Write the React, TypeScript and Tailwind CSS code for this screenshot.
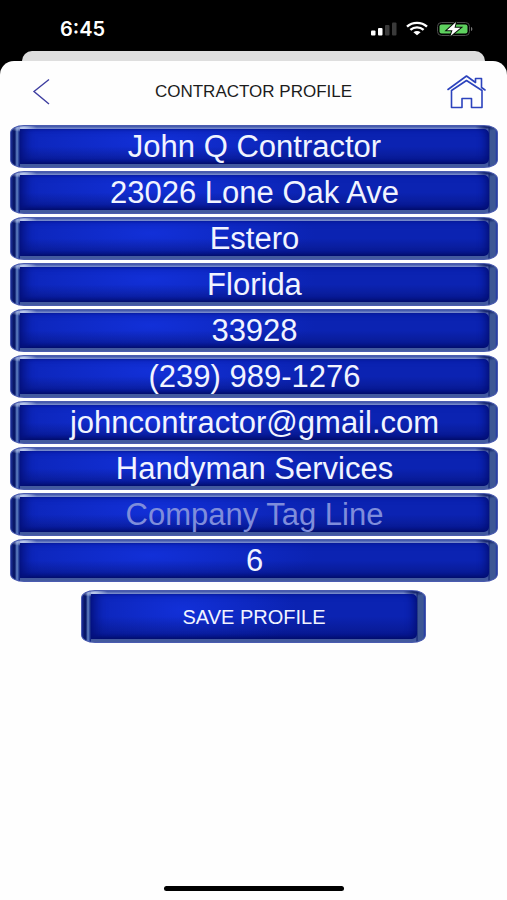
import { useState } from "react";
import type { ReactNode } from "react";

const fields = [
  { id: "name", label: "Name", value: "John Q Contractor", type: "text" },
  { id: "address", label: "Address", value: "23026 Lone Oak Ave", type: "text" },
  { id: "city", label: "City", value: "Estero", type: "text" },
  { id: "state", label: "State", value: "Florida", type: "text" },
  { id: "zip", label: "Zip code", value: "33928", type: "text" },
  { id: "phone", label: "Phone", value: "(239) 989-1276", type: "tel" },
  { id: "email", label: "Email", value: "johncontractor@gmail.com", type: "email" },
  { id: "company", label: "Company", value: "Handyman Services", type: "text" },
  { id: "tagline", label: "Company Tag Line", value: "", type: "text" },
  { id: "tax", label: "Sales tax", value: "6", type: "text" },
];

const face =
  "block w-full rounded-r-[5px] bg-[linear-gradient(to_bottom,transparent_50%,rgba(2,6,80,0.4)_100%),radial-gradient(ellipse_35%_110%_at_28%_35%,#1230d8,#0b23b2)] text-center text-[#f1f4ff] shadow-[inset_10px_0_12px_-6px_#04107a,inset_-8px_0_9px_-5px_#04107a,inset_0_-3px_4px_-2px_#020a5c,inset_0_2px_3px_-2px_#06179a] outline-none";

function Bevel({ children }: { children: ReactNode }) {
  return (
    <div className="rounded-[14px/8px] border border-[#4a5bb0] bg-[radial-gradient(ellipse_14px_4px_at_12px_2px,#c3d1f0,transparent),radial-gradient(ellipse_12px_4px_at_calc(100%-10px)_1px,#101f66,transparent),linear-gradient(to_right,#1b2c96_0px,#05135f_3px,#0a1c70_4px,#6787c6_6px,#3c5cae_7px,#07157a_9px,transparent_9px,transparent_calc(100%-9px),#0a1c70_calc(100%-8px),#3d5795_calc(100%-7px),#3d5795_calc(100%-2px),#2138a8_100%),linear-gradient(to_bottom,#3a50a6_0px,#8093d0_3px,#435a9f_6px,#435a9f_100%)] pt-[3px] pr-[8px] pb-[3px] pl-[9px]">
      {children}
    </div>
  );
}

function StatusIcons() {
  return (
    <svg width="104" height="16" viewBox="0 0 104 16" aria-hidden="true">
      <rect x="0" y="9.5" width="4.5" height="5" rx="1" fill="#fff" />
      <rect x="7" y="7" width="4.5" height="7.500" rx="1" fill="#fff" />
      <rect x="14" y="4" width="4.5" height="10.500" rx="1" fill="#3a3a3a" />
      <rect x="21" y="1.500" width="4.5" height="13" rx="1" fill="#3a3a3a" />
      <g fill="none" stroke="#fff" strokeWidth="2.4">
        <path d="M36 5.6c5.6-5 14.4-5 20 0" />
        <path d="M39.4 8.8c3.8-3.3 9.4-3.3 13.2 0" />
      </g>
      <path d="M42.4 11.2c2.1-1.7 5.1-1.7 7.2 0L46 14.2z" fill="#fff" />
      <rect x="66.5" y="1.500" width="32" height="13" rx="4" fill="none" stroke="#4d4d4d" />
      <rect x="68.5" y="3.500" width="28" height="9" rx="2" fill="#5ed15f" />
      <path d="M100 6c1.800.4 1.800 3.600 0 4z" fill="#777" />
      <path d="M85 1 76 9.200h5.500L79.500 15l10-8.200h-6z" fill="#fff" stroke="#071007" strokeWidth="2" paintOrder="stroke" />
    </svg>
  );
}

export default function App() {
  const [values, setValues] = useState<Record<string, string>>(
    Object.fromEntries(fields.map((f) => [f.id, f.value])),
  );

  return (
    <div className="flex min-h-screen flex-col bg-black font-['Liberation_Sans',Arial,sans-serif]">
      <div className="flex h-[51px] items-center justify-between pt-[6px] pr-8 pl-[60px]">
        <span className="font-['Inter',sans-serif] text-[20px] leading-6 font-semibold text-white">6:45</span>
        <StatusIcons />
      </div>
      <div className="mx-[22px] h-[24px] rounded-t-[10px] bg-[#dedede]" />
      <main className="-mt-[14px] flex flex-1 flex-col rounded-t-[14px] bg-[#fefefe]">
        <header className="flex h-[64px] items-center justify-between px-5 pb-[3px]">
          <button type="button" aria-label="Back" className="flex w-10 pl-3">
            <svg width="18" height="28" viewBox="0 0 18 28" fill="none" stroke="#3d3da0" strokeWidth="1.4" aria-hidden="true">
              <path d="M17 1.500 2 13.500 17 26" />
            </svg>
          </button>
          <h1 className="text-[17px] leading-6 text-[#1c1c1c]">CONTRACTOR PROFILE</h1>
          <button type="button" aria-label="Home" className="flex w-10">
            <svg width="40" height="36" viewBox="0 0 40 36" fill="none" stroke="#2c43bd" strokeWidth="1.6" strokeLinejoin="round" strokeLinecap="round" aria-hidden="true">
              <path d="M1 15.500 19.500 2l9 6.500V4.500h6v9l3.500 2.500" />
              <path d="M4.500 16.500 19.500 6.500l15.500 10v17H24.500v-9h-9.500v9H4.500z" />
            </svg>
          </button>
        </header>
        <form className="flex flex-1 flex-col" onSubmit={(e) => e.preventDefault()}>
          <div className="flex flex-col gap-[3px] pr-[9px] pl-[10px]">
            {fields.map((f) => (
              <Bevel key={f.id}>
                <input
                  id={f.id}
                  type={f.type}
                  aria-label={f.label}
                  value={values[f.id]}
                  placeholder={f.label}
                  onChange={(e) => setValues({ ...values, [f.id]: e.target.value })}
                  className={`${face} h-[35px] pt-px text-[31px] leading-[34px] placeholder:text-[#7f8ddb] placeholder:opacity-100`}
                />
              </Bevel>
            ))}
          </div>
          <div className="mx-auto mt-2 w-[68%]">
            <Bevel>
              <button type="submit" className={`${face} h-[45px] text-[20px] leading-6`}>
                SAVE PROFILE
              </button>
            </Bevel>
          </div>
        </form>
        <div className="mx-auto mb-[9px] h-[5px] w-[180px] rounded-full bg-black" />
      </main>
    </div>
  );
}
